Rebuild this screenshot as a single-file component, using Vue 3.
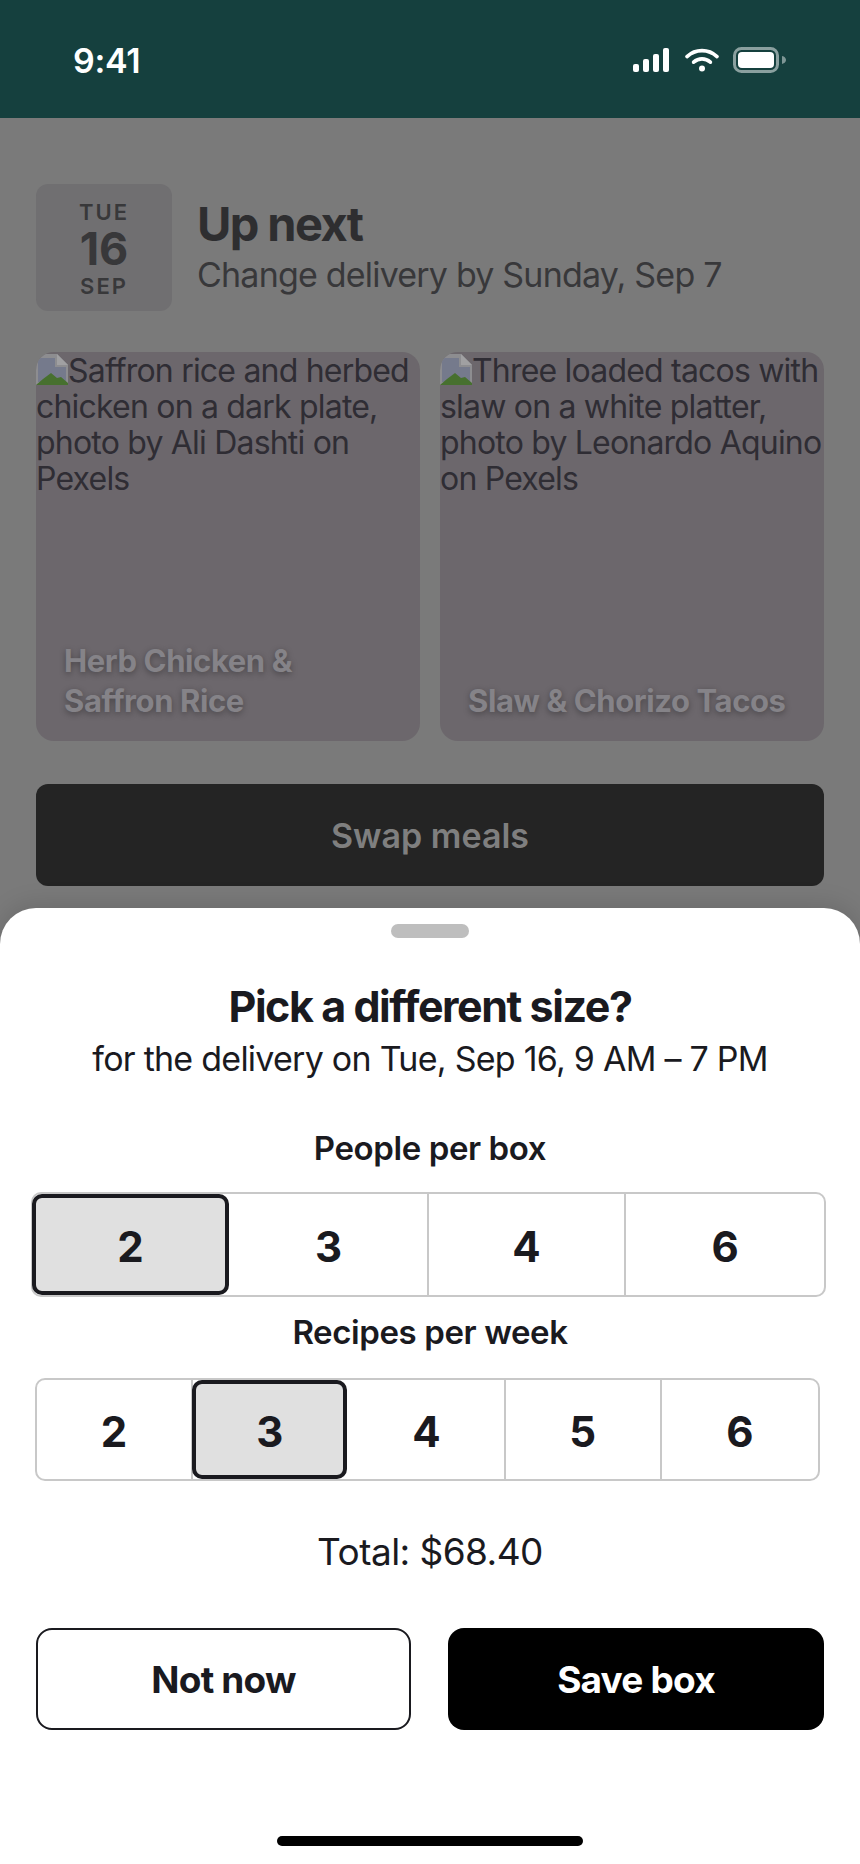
<template>
  <div class="screen">
    <header class="status-bar">
      <span class="time">9:41</span>
      <div class="status-icons">
        <svg width="36" height="24" viewBox="0 0 36 24" fill="#fff">
          <rect x="0" y="16" width="6" height="8" rx="2" />
          <rect x="10" y="11" width="6" height="13" rx="2" />
          <rect x="20" y="6" width="6" height="18" rx="2" />
          <rect x="30" y="0" width="6" height="24" rx="2" />
        </svg>
        <svg class="wifi" width="34" height="24" viewBox="0 0 34 24" fill="none" stroke="#fff" stroke-width="3.6" stroke-linecap="round">
          <path d="M2 8.600C10.500 .6 23.500 .6 32 8.600" />
          <path d="M8.600 14.200C13.600 9.800 20.400 9.800 25.400 14.200" />
          <circle cx="17" cy="20.600" r="3" fill="#fff" stroke="none" />
        </svg>
        <svg width="54" height="26" viewBox="0 0 54 26">
          <rect x="1.500" y="1.500" width="43" height="23" rx="7" fill="none" stroke="#fff" stroke-opacity=".5" stroke-width="3" />
          <rect x="5" y="5" width="36" height="16" rx="4" fill="#fff" />
          <path d="M49 9c2.600 .6 4 2.200 4 4s-1.400 3.400-4 4z" fill="#fff" fill-opacity=".45" />
        </svg>
      </div>
    </header>

    <main class="behind">
      <section class="next-row">
        <div class="date-box">
          <span class="date-small">TUE</span>
          <span class="date-day">16</span>
          <span class="date-small">SEP</span>
        </div>
        <div>
          <h2 class="next-title">Up next</h2>
          <p class="next-sub">Change delivery by Sunday, Sep 7</p>
        </div>
      </section>

      <section class="meals">
        <article v-for="meal in meals" :key="meal.name" class="meal">
          <p class="alt">
            <svg class="broken" width="32" height="32" viewBox="0 0 32 32">
              <path d="M0 1h21l11 11v20H0z" fill="#8d8d90" />
              <path d="M21 1l11 11H21z" fill="#a0a0a2" />
              <path d="M2 5h17v9h11v15H2z" fill="#757a8c" />
              <path d="M0 32l7-6 8-6 6 5 4-1 7 6v2z" fill="#47702f" />
            </svg>{{ meal.alt }}
          </p>
          <h3 class="meal-name">{{ meal.name }}</h3>
        </article>
      </section>

      <button class="swap">Swap meals</button>
    </main>

    <section class="sheet">
      <div class="handle"></div>
      <h1 class="sheet-title">Pick a different size?</h1>
      <p class="sheet-sub">for the delivery on Tue, Sep 16, 9 AM – 7 PM</p>

      <h4 class="group-label people-label">People per box</h4>
      <div class="seg seg-people">
        <div v-for="n in people" :key="n" class="cell" :class="{ active: n === 2 }">{{ n }}</div>
      </div>

      <h4 class="group-label recipes-label">Recipes per week</h4>
      <div class="seg seg-recipes">
        <div v-for="n in recipes" :key="n" class="cell" :class="{ active: n === 3 }">{{ n }}</div>
      </div>

      <p class="total">Total: $68.40</p>

      <div class="actions">
        <button class="btn btn-ghost">Not now</button>
        <button class="btn btn-solid">Save box</button>
      </div>

      <div class="home-bar"></div>
    </section>
  </div>
</template>

<script setup>
const meals = [
  {
    name: 'Herb Chicken & Saffron Rice',
    alt: 'Saffron rice and herbed chicken on a dark plate, photo by Ali Dashti on Pexels'
  },
  {
    name: 'Slaw & Chorizo Tacos',
    alt: 'Three loaded tacos with slaw on a white platter, photo by Leonardo Aquino on Pexels'
  }
]

const people = [2, 3, 4, 6]
const recipes = [2, 3, 4, 5, 6]
</script>

<style>
html,
body {
  margin: 0;
  background: #fff;
}
</style>

<style scoped>
.screen {
  position: relative;
  width: 860px;
  height: 1864px;
  overflow: hidden;
  background: #7a7a7a;
  font-family: Inter, "Liberation Sans", sans-serif;
  color: #1a1a1f;
}

h1, h2, h3, h4, p {
  margin: 0;
}

.status-bar {
  display: flex;
  justify-content: space-between;
  align-items: center;
  height: 118px;
  padding: 2px 73px 0;
  box-sizing: border-box;
  background: #15403e;
  color: #fff;
}

.time {
  font-size: 34px;
  font-weight: 600;
  letter-spacing: -0.3px;
  line-height: 1;
  margin-top: 1px;
}

.status-icons {
  display: flex;
  align-items: center;
  gap: 14px;
}

.wifi {
  margin-left: 2px;
}

.behind {
  padding: 66px 36px 0;
}

.next-row {
  display: flex;
  align-items: center;
  gap: 25px;
}

.date-box {
  display: flex;
  flex-direction: column;
  align-items: center;
  justify-content: center;
  box-sizing: border-box;
  width: 136px;
  height: 127px;
  padding-top: 3px;
  border-radius: 12px;
  background: #706f71;
  color: #38383a;
}

.date-small {
  font-size: 22px;
  font-weight: 600;
  letter-spacing: 2px;
  line-height: 30px;
}

.date-day {
  font-size: 45px;
  font-weight: 700;
  line-height: 44px;
}

.next-title {
  padding-top: 1px;
  font-size: 47px;
  font-weight: 700;
  letter-spacing: -1.6px;
  line-height: 50px;
  color: #2e2e30;
}

.next-sub {
  margin-top: 4px;
  font-size: 34px;
  letter-spacing: -0.8px;
  line-height: 44px;
  color: #38383a;
}

.meals {
  display: grid;
  grid-template-columns: 1fr 1fr;
  gap: 20px;
  margin-top: 41px;
}

.meal {
  position: relative;
  height: 389px;
  border-radius: 18px;
  background: #6c676c;
  overflow: hidden;
}

.alt {
  padding-top: 1px;
  font-size: 32px;
  letter-spacing: -0.8px;
  line-height: 36px;
  color: #2f2d34;
}

.broken {
  vertical-align: -3px;
}

.meal-name {
  position: absolute;
  left: 28px;
  right: 28px;
  bottom: 20px;
  font-size: 31px;
  font-weight: 700;
  letter-spacing: -0.4px;
  line-height: 40px;
  color: #858388;
  text-shadow: 0 2px 6px rgba(0, 0, 0, 0.35);
}

.swap {
  display: block;
  width: 100%;
  height: 102px;
  margin-top: 43px;
  border: 0;
  border-radius: 12px;
  background: #242424;
  color: #7f7f7f;
  font-family: inherit;
  font-size: 34px;
  font-weight: 600;
}

.sheet {
  position: absolute;
  left: 0;
  right: 0;
  top: 908px;
  bottom: 0;
  border-radius: 36px 36px 0 0;
  background: #fff;
  box-shadow: 0 -4px 24px rgba(0, 0, 0, 0.12);
  text-align: center;
}

.handle {
  width: 78px;
  height: 14px;
  margin: 16px auto 0;
  border-radius: 7px;
  background: #bebebe;
}

.sheet-title {
  margin-top: 43px;
  font-size: 43px;
  font-weight: 700;
  letter-spacing: -1.45px;
  line-height: 50px;
}

.sheet-sub {
  margin-top: 6px;
  font-size: 34px;
  letter-spacing: -0.75px;
  line-height: 44px;
}

.group-label {
  font-size: 33px;
  font-weight: 600;
  letter-spacing: -0.4px;
  line-height: 40px;
}

.people-label {
  margin-top: 47px;
}

.recipes-label {
  margin-top: 15px;
}

.seg {
  display: grid;
  box-sizing: border-box;
  border: 2px solid #c8c8c8;
  border-radius: 10px;
  background: #fff;
}

.seg-people {
  grid-template-columns: repeat(4, 1fr);
  height: 105px;
  margin: 24px 34px 0 31px;
}

.seg-recipes {
  grid-template-columns: repeat(5, 1fr);
  height: 103px;
  margin: 26px 40px 0 35px;
}

.cell {
  display: flex;
  align-items: center;
  justify-content: center;
  box-sizing: border-box;
  padding-top: 3px;
  border-right: 2px solid #c8c8c8;
  font-size: 42px;
  font-weight: 700;
}

.cell:last-child {
  border-right: 0;
}

.cell.active {
  margin: 0 2px 0 -1px;
  border: 4px solid #1a1a1f;
  border-radius: 10px;
  background: #e0e0e0;
}

.total {
  margin-top: 46px;
  font-size: 37px;
  letter-spacing: -0.55px;
  line-height: 50px;
}

.actions {
  display: grid;
  grid-template-columns: 375px 376px;
  justify-content: space-between;
  margin: 51px 36px 0;
}

.btn {
  box-sizing: border-box;
  height: 102px;
  padding-top: 2px;
  border-radius: 16px;
  font-family: inherit;
  font-size: 37px;
  font-weight: 700;
  letter-spacing: -0.8px;
}

.btn-ghost {
  border: 2px solid #1a1a1f;
  background: #fff;
  color: #1a1a1f;
}

.btn-solid {
  border: 0;
  background: #000;
  color: #fff;
}

.home-bar {
  width: 306px;
  height: 10px;
  margin: 106px auto 0;
  border-radius: 5px;
  background: #000;
}
</style>
